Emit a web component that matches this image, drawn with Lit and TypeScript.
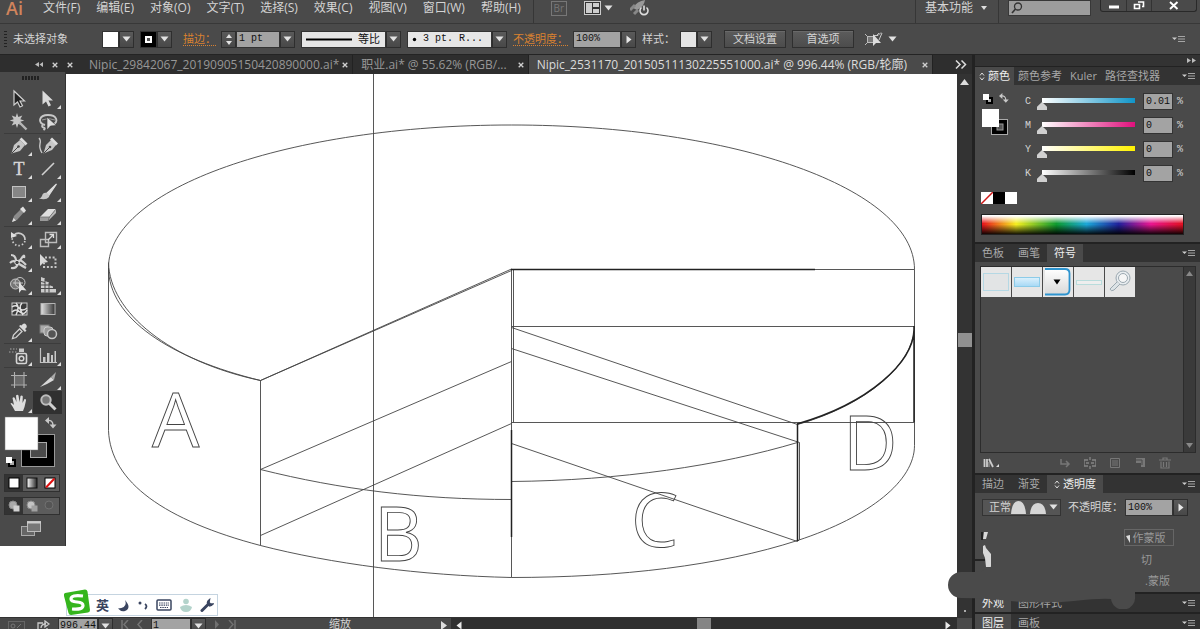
import { LitElement, html, svg, css, nothing } from "lit";
import { customElement, property } from "lit/decorators.js";
import { classMap } from "lit/directives/class-map.js";
import { styleMap } from "lit/directives/style-map.js";

const base = css`
  *, *::before, *::after { box-sizing: border-box; }
  :host { color: #d4d4d4; font: 11px/14px "Open Sans", "Noto Sans CJK SC", sans-serif; }
  button, input, select { font: inherit; color: inherit; margin: 0; padding: 0; border: 0; border-radius: 0; background: none; min-width: 0; }
  button { display: flex; align-items: center; justify-content: center; flex: none; white-space: nowrap; }
  svg { display: block; flex: none; }
  .mono { font-family: "Liberation Mono", "Noto Sans CJK SC", monospace; font-size: 10px; }
  .box { background: #a3a3a3; color: #111; border: 1px solid #333; }
  .drop { width: 15px; border: 1px solid #2e2e2e; background: linear-gradient(#5a5a5a, #484848); }
`;

const down = svg`<svg width="9" height="6" viewBox="0 0 9 6"><path d="M0.500 0.500h8l-4 5z" fill="#e2e2e2"/></svg>`;
const right = svg`<svg width="6" height="9" viewBox="0 0 6 9"><path d="M0.500 0.500v8l5-4z" fill="#e8e8e8"/></svg>`;
const left = svg`<svg width="6" height="9" viewBox="0 0 6 9"><path d="M5.500 0.500v8l-5-4z" fill="#e8e8e8"/></svg>`;
const cross = svg`<svg width="6" height="6" viewBox="0 0 6 6"><path d="M0.700 0.700l4.600 4.600M5.300 0.700L0.700 5.300" stroke="#d0d0d0" stroke-width="1.300"/></svg>`;
const flyout = svg`<svg width="14" height="8" viewBox="0 0 14 8"><path d="M0 2.500h5L2.500 5z" fill="#ccc"/><path d="M6 1.500h7M6 4h7M6 6.500h7" stroke="#a5a5a5" fill="none"/></svg>`;
const swap = svg`<g fill="none" stroke="#c8c8c8" stroke-width="1.400"><path d="M2 3.500q6-1 6 5"/></g><path d="M4 0v7L0 3.500zM4.500 7.500h7L8 11.500z" fill="#c8c8c8"/>`;

interface Tool { name: string; icon: unknown; more?: boolean; active?: boolean; }
const g = "#c6c6c6";
const toolGroups: Tool[][] = [
  [
    { name: "选择工具", icon: svg`<path d="M5 2v14l3.500-3 2.500 5 2.500-1.300-2.500-4.700h4.500z" fill="#222" stroke="#d0d0d0" stroke-width="1.200"/>` },
    { name: "直接选择工具", more: true, icon: svg`<path d="M4.500 1.500v14l3.500-3 2.500 5 2.500-1.300-2.500-4.700h4.500z" fill="#dadada"/>` },
    { name: "魔棒工具", icon: svg`<path d="M8 1l1.300 4 4-1.500-2 3.700 4 1.300-4 1.300 2 3.500-4-1.300L8 16l-1.300-4-4 1.500 2-3.700-4-1.300 4-1.300-2-3.700 4 1.500z" fill="${g}"/><path d="M10.500 10.500l7 7" stroke="#b5b5b5" stroke-width="2.400"/>` },
    { name: "套索工具", icon: svg`<path d="M7 13C-1 11 1 3 10 3s11 7 5 9.500M5 12q-2 3 .5 3.500t0 2.500" fill="none" stroke="${g}" stroke-width="1.900"/><path d="M4 8q6-3 13 0" fill="none" stroke="#999"/><path d="M9 5v13l3.500-4 6-.5z" fill="#dcdcdc" stroke="#333" stroke-width=".6"/>` },
  ],
  [
    { name: "钢笔工具", more: true, icon: svg`<path d="M2.500 17.500L5 9l6-5 5 5-5 6z" fill="${g}"/><path d="M3 17l6.500-6.500" stroke="#444"/><circle cx="9.500" cy="10.500" r="1.300" fill="#444"/><path d="M11.500 2.500l6 6" stroke="#dcdcdc" stroke-width="2.800"/>` },
    { name: "曲率工具", icon: svg`<path d="M5.500 17.500L8 9l5-5 5 5-4 5z" fill="${g}"/><path d="M6 17l6-6" stroke="#444"/><circle cx="12" cy="11" r="1.300" fill="#444"/><path d="M13 2.500l6 6" stroke="#dcdcdc" stroke-width="2.800"/><path d="M1 2q2 2 1 6t2 9" fill="none" stroke="${g}" stroke-width="1.400"/>` },
    { name: "文字工具", more: true, icon: svg`<text x="10" y="16" text-anchor="middle" font-family="Liberation Serif" font-size="18" fill="#d6d6d6" stroke="#d6d6d6" stroke-width=".4">T</text>` },
    { name: "直线段工具", more: true, icon: svg`<path d="M4 16L16 4" stroke="#d0d0d0" stroke-width="1.600"/>` },
    { name: "矩形工具", more: true, icon: svg`<rect x="3.500" y="4.500" width="13" height="11" fill="#868686" stroke="#c2c2c2"/>` },
    { name: "画笔工具", more: true, icon: svg`<path d="M18.500 2L9 11l2 2z" fill="#dcdcdc" stroke="#dcdcdc" stroke-width="1.200"/><path d="M9 11q-4-1-5 3-1 2-3 2.500 7 2 10-1.500 1-2-2-4z" fill="${g}"/>` },
    { name: "铅笔工具", more: true, icon: svg`<path d="M3 17l2-6 8-8 3 3-8 9z" fill="#8b8b8b"/><path d="M11 4l4 4 2-2.500-3-4z" fill="#e0e0e0"/><path d="M3 17l1.500-4 2.500 2.500z" fill="#ddd"/>` },
    { name: "橡皮擦工具", more: true, icon: svg`<path d="M2 12L10 4h8l-6.500 8z" fill="#dedede"/><path d="M2 12v4h8l1.500-4z" fill="#9a9a9a"/><path d="M11.500 12L18 4v4l-8 8z" fill="#b8b8b8"/><path d="M2 12h9.500l-1.500 4M11.500 12L18 4" fill="none" stroke="#666" stroke-width=".7"/>` },
  ],
  [
    { name: "旋转工具", more: true, icon: svg`<path d="M5 6a6.500 6.500 0 0 1 11 5" fill="none" stroke="#ccc" stroke-width="1.700"/><path d="M16 12a6.500 6.500 0 0 1-12.500-4" fill="none" stroke="#ccc" stroke-width="1.700" stroke-dasharray="1.500 2"/><path d="M2 3v6l6-2z" fill="#ddd"/>` },
    { name: "比例缩放工具", more: true, icon: svg`<path d="M7.500 3.500h11v10h-11zM2.500 10.500h8v7h-8z" fill="none" stroke="#bcbcbc" stroke-width="1.400"/><path d="M10 11l5-5m-3.500-.5H15.500V9" fill="none" stroke="#ddd" stroke-width="1.300"/>` },
    { name: "宽度工具", more: true, icon: svg`<path d="M2 3q4 0 5 5t5-1 3-1 M2 16q6 1 7-5t8 2M1 11q3-3 6-1t10 6" fill="none" stroke="#d0d0d0" stroke-width="2.200"/><circle cx="8" cy="10.500" r="2.200" fill="#444" stroke="#ddd"/>` },
    { name: "自由变换工具", icon: svg`<path d="M2 2v12l3-3 5-1z" fill="#d8d8d8"/><path d="M7 5.500h10.500v9.500H6V11" fill="none" stroke="#c8c8c8" stroke-width="2" stroke-dasharray="2 1.800"/>` },
    { name: "形状生成器工具", more: true, icon: svg`<circle cx="6.500" cy="9" r="5" fill="#777" stroke="${g}"/><circle cx="11" cy="7.500" r="5" fill="none" stroke="${g}"/><path d="M4 8h10" stroke="${g}"/><path d="M10 7v11l2.500-3 5 .5z" fill="#e0e0e0"/>` },
    { name: "透视网格工具", more: true, icon: svg`<path d="M3 2l4 1.500V6l4 1.500V10l4 1.500V14h3v3.500H3z" fill="#ccc"/><path d="M3 6.500l4 1M3 10h9M3 13.500h14M7 4v13.500M11 8v9.500" stroke="#4a4a4a" fill="none"/>` },
  ],
  [
    { name: "网格工具", icon: svg`<rect x="3" y="4" width="15" height="12" fill="#3a3a3a" stroke="#ccc"/><path d="M3 8q4-3 7 1t8 0M3 13q4-4 8 0t7-2M7 4q4 4 0 12M13 4q-4 4 1 12" fill="none" stroke="#e0e0e0" stroke-width="1.500"/>` },
    { name: "渐变工具", icon: svg`<defs><linearGradient id="gt"><stop stop-color="#e5e5e5"/><stop offset="1" stop-color="#333"/></linearGradient></defs><rect x="3" y="4.500" width="14" height="11" fill="url(#gt)" stroke="#b5b5b5"/>` },
    { name: "吸管工具", more: true, icon: svg`<path d="M3.500 16.500l1-3.500 6-6 2.500 2.500-6 6z" fill="none" stroke="#d0d0d0" stroke-width="1.300"/><path d="M10 4l6 6 1.500-1.500L16 7q3-2 1-4.500t-4.500 1L11.500 3z" fill="#dadada"/>` },
    { name: "混合工具", icon: svg`<rect x="2" y="3" width="9" height="8" fill="#aaa" stroke="#777"/><rect x="6" y="5" width="9" height="9" rx="3" fill="#999" stroke="#ccc"/><circle cx="14" cy="12" r="4.500" fill="#555" stroke="#c6c6c6" stroke-width="1.500"/>` },
  ],
  [
    { name: "符号喷枪工具", more: true, icon: svg`<rect x="7.500" y="7.500" width="10" height="10" rx="1.500" fill="none" stroke="#d6d6d6" stroke-width="1.600"/><circle cx="12.500" cy="12.500" r="2.300" fill="none" stroke="#d6d6d6" stroke-width="1.500"/><path d="M10 6V2.500h5V6z" fill="#c6c6c6"/><path d="M1 3h7M0 6h8" stroke="#888" stroke-width="1.500" stroke-dasharray="1.500 1.500"/>` },
    { name: "柱形图工具", more: true, icon: svg`<path d="M2.500 2v14.500H19" fill="none" stroke="#c2c2c2" stroke-width="1.200"/><path d="M5 11h2.500v5H5zM9 7h2.500v9H9zM13 9h2v7h-2zM16.500 5H18v11h-1.500z" fill="#c8c8c8"/>` },
  ],
  [
    { name: "画板工具", icon: svg`<rect x="6" y="6" width="8.500" height="8.500" fill="#6a6a6a"/><path d="M5.500 2v16M15 2v16M2 5.500h16M2 15h16" stroke="#b0b0b0" stroke-width="1.100"/>` },
    { name: "切片工具", more: true, icon: svg`<path d="M2 17L13 7l3 3-7 4z" fill="#d8d8d8"/><path d="M13 7l5-5-2 8z" fill="#aaa"/>` },
    { name: "抓手工具", more: true, icon: svg`<path d="M6 18Q4 14 1.500 10.500q1-1.500 3 1L5 12 3.500 5q1.500-1.500 2.500.5L7.500 9 7 2.500q1.500-1.500 2.500 0L10.500 9l1-6q1.500-1.300 2.300.5L13.500 10l2-4q1.800-.5 1.500 1.500L15.500 14 14 18z" fill="#dedede"/>` },
    { name: "缩放工具", active: true, icon: svg`<circle cx="8" cy="7" r="4.700" fill="#777" stroke="#bdbdbd" stroke-width="2"/><path d="M11.500 10.500l6 6" stroke="#cfcfcf" stroke-width="3"/>` },
  ],
];

@customElement("tool-panel")
class ToolPanel extends LitElement {
  static styles = [base, css`
    :host { display: block; width: 66px; padding: 4px 4px 8px; background: #4a4a4a; border-right: 1px solid #333; }
    .grip { width: 18px; height: 4px; margin: 0 auto 7px 18px; background: repeating-linear-gradient(90deg, #222 0 2px, #4a4a4a 2px 3px); }
    .group { display: grid; grid-template-columns: 29px 29px; grid-auto-rows: 23px; }
    .group + .group { border-top: 1px solid #3c3c3c; }
    .tool { position: relative; }
    .active { background: #303030; }
    .more::after { content: ""; position: absolute; right: 1px; bottom: 1px; border: 2px solid; border-color: transparent #ddd #ddd transparent; }
    .colors { margin-top: 1px; }
    .row { display: grid; grid-template-columns: repeat(3, 18px); height: 18px; border: 1px solid #303030; width: 56px; margin-top: 5px; background: #5c5c5c; }
    .row > button { width: 100%; height: 16px; }
    .row > .on { background: #333; }
    .screen { margin: 5px 0 0 16px; }
  `];
  render() {
    return html`
      <div class="grip"></div>
      ${toolGroups.map((tools) => html`<div class="group">${tools.map((t) => html`
        <button class=${classMap({ tool: true, more: !!t.more, active: !!t.active })} aria-label=${t.name}>
          <svg width="20" height="20" viewBox="0 0 20 20">${t.icon}</svg>
        </button>`)}</div>`)}
      <button class="colors" aria-label="填色和描边">
        <svg width="56" height="54" viewBox="4 415 56 54">
          <rect x="21.500" y="434.500" width="33" height="32" fill="#000" stroke="#999"/>
          <rect x="30.500" y="442.500" width="16" height="15" fill="#4a4a4a" stroke="#aaa"/>
          <rect x="5" y="417" width="33" height="33" fill="#fff" stroke="#777" stroke-width=".5"/>
          <g transform="translate(45 417)">${swap}</g>
          <rect x="9" y="460" width="6" height="6" stroke="#000" stroke-width="2" fill="#aaa"/><rect x="6" y="457" width="6" height="6" fill="#fff"/>
        </svg>
      </button>
      <div class="row">
        <button class="on" aria-label="颜色"><svg width="12" height="12"><rect x="1" y="1" width="10" height="10" fill="#fff" stroke="#000"/></svg></button>
        <button aria-label="渐变"><svg width="12" height="12"><defs><linearGradient id="gr"><stop stop-color="#fff"/><stop offset="1" stop-color="#222"/></linearGradient></defs><rect x="1" y="1" width="10" height="10" fill="url(#gr)" stroke="#111"/></svg></button>
        <button aria-label="无"><svg width="12" height="12"><rect x="1" y="1" width="10" height="10" fill="#fff" stroke="#000"/><path d="M2 10.500l8.500-9" stroke="#e01010" stroke-width="2"/></svg></button>
      </div>
      <div class="row">
        ${["正常绘图", "背面绘图", "内部绘图"].map((n, i) => html`<button class=${i === 0 ? "on" : ""} aria-label=${n}>
          <svg width="14" height="12"><circle cx="6" cy="5" r="4" fill=${["#aaa", "#c4c4c4", "#555"][i]} stroke=${i === 2 ? "#707070" : "#888"}/><rect x="6.500" y="5.500" width="6" height="6" fill=${["#d0d0d0", "#a0a0a0", "none"][i]}/></svg>
        </button>`)}
      </div>
      <button class="screen" aria-label="更改屏幕模式">
        <svg width="22" height="18"><rect x="1.500" y="6.500" width="13" height="9" fill="#666" stroke="#aaa"/><rect x="7.500" y="1.500" width="13" height="10" fill="#777" stroke="#bbb"/><path d="M7 2.500h14" stroke="#ccc" stroke-width="2"/></svg>
      </button>`;
  }
}

@customElement("control-bar")
class ControlBar extends LitElement {
  static styles = [base, css`
    :host { display: flex; align-items: center; gap: 6px; height: 31px; padding: 0 14px 0 4px; background: #4a4a4a; border-top: 1px solid #383838; }
    .grip { width: 3px; height: 16px; background: repeating-linear-gradient(#222 0 1px, #4a4a4a 1px 3px); }
    .status { width: 83px; }
    .field { display: flex; align-items: center; gap: 5px; white-space: nowrap; }
    .first { margin-left: 5px; }
    .combo { display: flex; height: 17px; }
    .combo > button { height: 17px; }
    .swatch { width: 17px; border: 1px solid #333; background: #fff; }
    .soft { background: #e4e4e4; }
    .stroke { background: #000; }
    .link { color: #d98130; border-bottom: 1px dotted #d98130; line-height: 13px; }
    .w44 { width: 44px; } .w48 { width: 48px; }
    .box { padding-left: 2px; }
    .list { display: flex; align-items: center; background: #e6e6e6; color: #111; border: 1px solid #333; padding: 0 4px; gap: 6px; width: 85px; }
    select { appearance: none; height: 15px; }
    .list select { flex: 1; }
    .push { height: 18px; width: 62px; border: 1px solid #2f2f2f; box-shadow: inset 0 1px #696969; background: linear-gradient(#5c5c5c, #4c4c4c); }
    .pair { display: flex; gap: 6px; margin: 0 5px 0 6px; }
    .align { gap: 5px; }
    .end { margin-left: auto; }
  `];
  render() {
    const arrow = (label: string, icon: unknown = down) => html`<button class="drop" aria-label=${label}>${icon}</button>`;
    return html`
      <span class="grip"></span>
      <span class="status">未选择对象</span>
      <div class="combo"><button class="swatch" aria-label="填色"></button>${arrow("填色选项")}</div>
      <div class="combo"><button class="swatch stroke" aria-label="描边颜色"><svg width="9" height="9"><rect x="2" y="2" width="5" height="5" fill="#555" stroke="#fff" stroke-width="2"/></svg></button>${arrow("描边颜色选项")}</div>
      <div class="field first">
        <label class="link" for="weight">描边：</label>
        <div class="combo">
          <button class="drop" aria-label="增减"><svg width="8" height="13"><path d="M1 5h6L4 1zM1 8h6l-3 4z" fill="#e2e2e2"/></svg></button>
          <input id="weight" class="box mono w44" value="1 pt">${arrow("描边粗细")}
        </div>
      </div>
      <div class="combo"><div class="list"><svg width="46" height="3"><path d="M0 1.500h46" stroke="#000" stroke-width="2"/></svg><select aria-label="变量宽度配置文件"><option>等比</option></select></div>${arrow("配置文件")}</div>
      <div class="combo"><div class="list"><svg width="5" height="5"><circle cx="2.500" cy="2.500" r="1.700"/></svg><select class="mono" aria-label="画笔定义"><option>3 pt. R...</option></select></div>${arrow("画笔")}</div>
      <div class="field">
        <label class="link" for="opacity">不透明度：</label>
        <div class="combo"><input id="opacity" class="box mono w48" value="100%">${arrow("不透明度选项", right)}</div>
      </div>
      <div class="field">
        <span>样式：</span>
        <div class="combo"><button class="swatch soft" aria-label="图形样式"></button>${arrow("样式选项")}</div>
      </div>
      <div class="pair"><button class="push">文档设置</button><button class="push">首选项</button></div>
      <button class="align" aria-label="选择类似的对象">
        <svg width="18" height="15" viewBox="0 0 18 15"><path d="M2.500 4.500h6v6h-6z" fill="#777" stroke="#bbb"/><path d="M0 2l3 3M0 13l3-3M11 4l3-3" fill="none" stroke="#bbb"/><path d="M8 2v12l3-3h5z" fill="#ddd"/><path d="M9 3.500h4l3-3M14 8l3-7" stroke="#ccc" fill="none"/></svg>${down}
      </button>
      <button class="end" aria-label="面板菜单">${flyout}</button>`;
  }
}

@customElement("menu-bar")
class MenuBar extends LitElement {
  static styles = [base, css`
    :host { display: flex; align-items: center; height: 23px; padding: 0 3px 7px 6px; background: #4a4a4a; }
    .logo { color: #d0845c; font: 600 18px/16px "Open Sans", sans-serif; width: 29px; }
    nav { display: flex; gap: 16px; padding-left: 8px; }
    nav > button { font-size: 12px; }
    .line { width: 1px; height: 23px; margin-top: 7px; background: #363636; }
    .icons { display: flex; align-items: center; gap: 17px; padding-left: 12px; margin-right: auto; }
    .bridge { width: 16px; height: 15px; border: 1px solid #777; color: #777; font-size: 10px; }
    .layout { gap: 3px; }
    .space { font-size: 12px; gap: 8px; padding: 0 11px 0 9px; }
    .search { display: flex; align-items: center; width: 83px; height: 16px; margin: 0 9px; background: #9d9d9d; border: 1px solid #383838; color: #111; padding-left: 2px; }
    .search input { width: 60px; }
    .win { display: flex; width: 97px; height: 12px; border: 1px solid #292929; border-top: 0; border-radius: 0 0 3px 3px; margin-bottom: 4px; }
    .win > button { width: 25px; height: 11px; }
    .win > button + button { border-left: 1px solid #333; }
    .win > .close { flex: 1; }
  `];
  render() {
    const menus = ["文件(F)", "编辑(E)", "对象(O)", "文字(T)", "选择(S)", "效果(C)", "视图(V)", "窗口(W)", "帮助(H)"];
    return html`
      <span class="logo">Ai</span>
      <nav>${menus.map((m) => html`<button>${m}</button>`)}</nav>
      <div class="icons">
        <span class="line"></span>
        <button class="bridge">Br</button>
        <button class="layout" aria-label="排列文档"><svg width="17" height="14"><rect x=".5" y=".5" width="16" height="13" fill="#333" stroke="#ccc"/><path d="M2 2h6v10H2zM9 2h6v4H9zM9 8h6v4H9z" fill="#ccc"/></svg>${down}</button>
        <button aria-label="GPU 性能"><svg width="20" height="18" viewBox="0 0 20 18"><path d="M3 9Q7 2 15 1q-1 7-8 10z" fill="#999"/><path d="M0 11l5-5M4 15l4-4" stroke="#888" stroke-width="3"/><path d="M11.500 8.500a4 4 0 1 0 5 0M14 6.500v5" fill="none" stroke="#ddd" stroke-width="1.600"/></svg></button>
      </div>
      <span class="line"></span>
      <button class="space">基本功能 <svg width="6" height="4"><path d="M0 0h6L3 4z" fill="#ddd"/></svg></button>
      <span class="line"></span>
      <label class="search"><svg width="12" height="12"><circle cx="7" cy="4.500" r="3.500" fill="none" stroke="#333" stroke-width="1.300"/><path d="M4.500 7L1 11" stroke="#333" stroke-width="1.600"/></svg><input aria-label="搜索"></label>
      <div class="win">
        <button aria-label="最小化"><svg width="10" height="10"><path d="M0 6h10" stroke="#fff" stroke-width="3"/></svg></button>
        <button aria-label="还原"><svg width="12" height="9"><path d="M5 1h5.500v4.500H9M1.500 3.500h5v4h-5z" fill="none" stroke="#fff" stroke-width="1.600"/></svg></button>
        <button class="close" aria-label="关闭"><svg width="10" height="9"><path d="M1 1l7.500 7M8.500 1L1 8" stroke="#fff" stroke-width="1.900"/></svg></button>
      </div>`;
  }
}

@customElement("art-board")
class ArtBoard extends LitElement {
  static styles = css`
    :host { display: block; min-width: 0; background: #fff; overflow: hidden; }
    svg { display: block; width: 100%; height: 100%; }
    .ink { fill: none; stroke: #444; stroke-width: 0.900; }
    .bold { stroke: #222; stroke-width: 1.500; }
    .letter { font: 75px "Open Sans", sans-serif; stroke: #444; }
  `;
  render() {
    return html`<svg viewBox="0 74 957 543" preserveAspectRatio="xMinYMin meet" role="img" aria-label="立体饼图轮廓">
      <g class="ink">
        <path d="M373.500 74V617"/>
        <g transform="translate(.5 .5)">
          <path d="M914 269C914 188 734 124.500 511 124.500S108 188 108 267C108 318 170 358 260 380L511 270"/>
          <path d="M108 262C109 312 170 361 260 380M260 380L511 268.500"/>
          <path d="M108 267V430C110 482 165 520 260 545C330 563 420 575 511 577C620 577 720 565 797 540C870 516 914 480 914 445V269"/>
          <path d="M260 380V545M260 469L511 361M260 535L511 423M260 469C340 489 420 499 511 499"/>
          <path d="M511 269H914M511 326H914M511 422H914M511 269V577M513 269V422"/>
          <path d="M511 327L797 424M511 348L799 442M511 443L797 541M799 442V539L797 541"/>
          <path d="M511 481C620 480 720 465 797 442M797 424C870 403 913 362 914 326"/>
        </g>
        <g class="bold">
          <path d="M511 269.500H815M511.500 430V537M797.500 424V541M914 326V422M797 424C870 403 913 362 914 330"/>
        </g>
        <text class="letter" x="152" y="447">A</text>
        <text class="letter" x="374" y="561">B</text>
        <text class="letter" x="631" y="547">C</text>
        <text class="letter" x="843" y="470">D</text>
      </g>
    </svg>`;
  }
}

@customElement("dock-panel")
class DockPanel extends LitElement {
  @property({ type: Array }) tabs: string[] = [];
  @property({ type: Number }) active = 0;
  @property({ type: Boolean }) marker = false;
  @property({ type: Boolean }) compact = false;
  static styles = [base, css`
    :host { display: flex; flex-direction: column; flex: none; background: #4a4a4a; border-bottom: 2px solid #222; }
    .tabs { display: flex; height: 18px; background: #333; padding-right: 4px; flex: none; }
    .tabs > button { padding: 0 7px; gap: 3px; color: #a8a8a8; }
    .tabs > .on { background: #4a4a4a; color: #eee; }
    .compact > button { padding: 0 4px; }
    .tabs > .menu { margin-left: auto; padding: 0; }
  `];
  render() {
    return html`
      <div class=${classMap({ tabs: true, compact: this.compact })}>
        ${this.tabs.map((t, i) => html`<button class=${i === this.active ? "on" : ""}>
          ${this.marker && i === this.active ? html`<svg width="6" height="9"><path d="M1 3.500L3 1l2 2.500M1 5.500L3 8l2-2.500" fill="none" stroke="#ddd"/></svg>` : nothing}${t}
        </button>`)}
        <button class="menu" aria-label="面板菜单">${flyout}</button>
      </div>
      <slot></slot>`;
  }
}

@customElement("color-mixer")
class ColorMixer extends LitElement {
  static styles = [base, css`
    :host { display: block; height: 157px; padding: 8px 15px 0 6px; }
    .top { display: grid; grid-template-columns: 36px 1fr; }
    .wells { align-self: start; justify-self: start; }
    .rows { display: grid; gap: 7px; }
    .row { display: grid; grid-template-columns: 8px 1fr 30px 8px; gap: 4px; height: 17px; align-items: center; margin-left: 8px; }
    .box { height: 17px; padding-left: 2px; width: 30px; }
    .slide { appearance: none; width: 100%; height: 17px; background: linear-gradient(90deg, #fff, var(--ink)) 5px 5px / calc(100% - 9px) 5px no-repeat; }
    .slide::-webkit-slider-thumb { appearance: none; width: 10px; height: 8px; margin-top: 9px; background: #d0d0d0; clip-path: polygon(50% 0, 100% 60%, 100% 100%, 0 100%, 0 60%); }
    .chips { display: flex; margin-top: 10px; }
    .chips > button { width: 12px; height: 12px; background: #fff; }
    .chips > .black { background: #000; }
    .spectrum { display: block; width: calc(100% - 1px); height: 21px; margin-top: 10px; border: 1px solid #222;
      background: linear-gradient(#fff 0 5%, transparent 45%, transparent 50%, #000 105%), linear-gradient(90deg, #e8111c, #f5ee20 17%, #0d9a2f 37%, #1ba7d8 52%, #20209a 68%, #e81590 84%, #e11020); }
  `];
  render() {
    const inks: [string, string, string][] = [["C", "0.01", "#1095c8"], ["M", "0", "#e0107c"], ["Y", "0", "#fff200"], ["K", "0", "#000"]];
    return html`
      <div class="top">
        <button class="wells" aria-label="填色和描边">
          <svg width="28" height="44" viewBox="980 91 28 44">
            <rect x="986" y="96" width="5" height="5" fill="#aaa" stroke="#000" stroke-width="2"/><rect x="982" y="92" width="6" height="6" fill="#fff"/>
            <g transform="translate(998 91) scale(.85)">${swap}</g>
            <rect x="990.500" y="117.500" width="16" height="15" fill="#000" stroke="#aaa"/><rect x="996" y="122" width="6" height="6" fill="#555" stroke="#999"/>
            <rect x="981" y="107" width="17" height="18" fill="#fff"/>
          </svg>
        </button>
        <div class="rows">${inks.map(([n, v, c]) => html`<div class="row">
          <label class="mono" for=${"ink" + n}>${n}</label>
          <input class="slide" type="range" min="0" max="100" value="0" aria-label=${n + " 滑块"} style=${styleMap({ "--ink": c })}>
          <input class="box mono" id=${"ink" + n} value=${v}><span class="mono">%</span>
        </div>`)}</div>
      </div>
      <div class="chips"><button aria-label="无"><svg width="12" height="12"><path d="M0 12L12 0" stroke="#d01818" stroke-width="1.500"/></svg></button><button class="black" aria-label="黑色"></button><button aria-label="白色"></button></div>
      <button class="spectrum" aria-label="CMYK 色谱"></button>`;
  }
}

@customElement("symbol-list")
class SymbolList extends LitElement {
  static styles = [base, css`
    :host { display: flex; flex-direction: column; flex: 1; min-height: 0; padding: 4px 4px 0 5px; }
    .list { display: flex; flex: 1; border: 1px solid #2c2c2c; }
    .tiles { display: flex; flex: 1; gap: 1px; align-items: flex-start; }
    .tile { width: 30px; height: 30px; background: #e6e6e6; }
    .bar { display: flex; flex-direction: column; justify-content: space-between; align-items: center; width: 12px; padding: 4px 0; background: #3a3a3a; border-left: 1px solid #2c2c2c; }
    .foot { display: flex; align-items: center; height: 20px; padding: 0 25px 0 3px; gap: 13px; }
    .lib { margin-right: auto; }
  `];
  render() {
    const tiles = [
      svg`<rect x="2.500" y="6.500" width="25" height="17" fill="#e2e4e5" stroke="#b5d8e4"/>`,
      svg`<defs><linearGradient id="b" x2="0" y2="1"><stop stop-color="#ddf1fc"/><stop offset="1" stop-color="#a5d8f5"/></linearGradient></defs><rect x="2.500" y="10.500" width="25" height="9" fill="url(#b)" stroke="#8ccbe8"/>`,
      svg`<defs><linearGradient id="w" x2="0" y2="1"><stop stop-color="#fff"/><stop offset="1" stop-color="#d8d8d8"/></linearGradient></defs><path d="M2 2h20q4.500 0 4.500 4.500v16q0 5-4.500 5H2" fill="url(#w)" stroke="#2e94cf" stroke-width="1.800"/><path d="M10.500 12.500h7l-3.500 5z" fill="#000"/>`,
      svg`<rect x="2.500" y="13.500" width="25" height="4" fill="#eee" stroke="#b9dcdc"/>`,
      svg`<circle cx="18" cy="11" r="7" fill="#e9edf0" stroke="#9ba8b0"/><circle cx="18" cy="11" r="4.500" fill="#f6f6f6" stroke="#9ba8b0"/><path d="M12 15l-7 7q1 3 4 1l6-6" fill="#dde3e6" stroke="#9ba8b0"/>`,
    ];
    const foot: [string, unknown][] = [
      ["置入符号实例", svg`<path d="M2 2v5h8M7 4l3 3-3 3" fill="none" stroke="#777" stroke-width="1.500"/>`],
      ["断开符号链接", svg`<path d="M4 3H0v6h4M8 3h4v6H8M2 6h3M7 6h3M6 0v3M6 9v3" fill="none" stroke="#858585" stroke-width="1.300"/>`],
      ["符号选项", svg`<path d="M1.500 1.500h9v9h-9zM3 4h6M3 6h6M3 8h6" fill="none" stroke="#777"/>`],
      ["新建符号", svg`<path d="M2 1h9v9H7V6H2z" fill="#777"/><path d="M2 3h6v5" fill="none" stroke="#4a4a4a"/>`],
      ["删除符号", svg`<path d="M0 3h12M4 3V1h4v2M2 4.500v6.500h8V4.500M4.500 5v5M7.500 5v5" fill="none" stroke="#777" stroke-width="1.200"/>`],
    ];
    return html`
      <div class="list">
        <div class="tiles">${tiles.map((t, i) => html`<button class="tile" aria-label=${"符号 " + (i + 1)}><svg width="30" height="30">${t}</svg></button>`)}</div>
        <div class="bar"><svg width="7" height="5"><path d="M0 5h7L3.500 0z" fill="#888"/></svg><svg width="7" height="5"><path d="M0 0h7L3.500 5z" fill="#888"/></svg></div>
      </div>
      <div class="foot">
        <button class="lib" aria-label="符号库菜单"><svg width="17" height="11"><path d="M1.500 1v8M4 1v8M6 1l4 8" fill="none" stroke="#ccc" stroke-width="1.800"/><path d="M6 4v5" stroke="#aaa"/><path d="M13 9h3V6z" fill="#ddd"/></svg></button>
        ${foot.map(([n, i]) => html`<button aria-label=${n}><svg width="12" height="12">${i}</svg></button>`)}
      </div>`;
  }
}

@customElement("opacity-settings")
class OpacitySettings extends LitElement {
  static styles = [base, css`
    :host { display: block; height: 99px; padding: 5px 12px 0 7px; }
    .line { display: flex; align-items: center; height: 18px; }
    .mode { position: relative; display: flex; align-items: center; width: 79px; height: 17px; border: 1px solid #333; background: #555; }
    .mode select { appearance: none; width: 66px; padding-left: 6px; }
    .blob { position: absolute; left: 28px; top: 1px; }
    .name { margin-left: 7px; flex: 1; white-space: nowrap; }
    .box { width: 48px; height: 17px; padding-left: 2px; }
    .drop { height: 17px; }
    .mask { display: flex; flex-direction: column; align-items: flex-end; gap: 7px; margin: 13px 14px 0 0; color: #999; }
    .mask button { width: 50px; height: 17px; border: 1px solid #666; }
    .clip { width: 33px; }
    .invert { width: 29px; }
  `];
  render() {
    return html`
      <div class="line">
        <div class="mode"><select aria-label="混合模式"><option>正常</option></select>${down}
          <svg class="blob" width="36" height="13"><path d="M0 13Q1 0 7.500 0T15 13zM19 13Q20 2 27 2t8 11z" fill="#d6d6d6"/></svg></div>
        <label class="name" for="alpha">不透明度：</label>
        <input class="box mono" id="alpha" value="100%"><button class="drop" aria-label="不透明度选项">${right}</button>
      </div>
      <div class="mask"><button>作蒙版</button><span class="clip">切</span><span class="invert">.蒙版</span></div>`;
  }
}

@customElement("app-root")
class AppRoot extends LitElement {
  static styles = [base, css`
    :host { display: flex; flex-direction: column; height: 100vh; overflow: hidden; background: #4a4a4a; }
    menu-bar, control-bar { flex: none; }
    .main { display: flex; flex: 1; min-height: 0; border-top: 1px solid #242424; }
    .doc { display: flex; flex-direction: column; flex: 1; min-width: 0; }
    .tabs { display: flex; align-items: center; height: 19px; background: #2e2e2e; font-size: 12px; color: #979797; flex: none; }
    .tabs > .head { display: flex; align-items: center; justify-content: flex-end; gap: 9px; width: 73px; }
    .tab { display: flex; align-items: center; height: 19px; gap: 3px; padding: 0 4px 0 8px; border-right: 1px solid #222; white-space: nowrap; }
    .first { padding-left: 16px; }
    .wide { gap: 11px; }
    .on { background: #4a4a4a; color: #dcdcdc; gap: 15px; }
    .more { margin-left: auto; padding-right: 5px; }
    .work { position: relative; display: flex; flex: 1; min-height: 0; }
    art-board { flex: 1; }
    tool-panel { position: absolute; left: 0; top: -2px; }
    .ime { position: absolute; left: 66px; bottom: 1px; display: flex; align-items: center; gap: 8px; height: 22px; padding: 0 3px 0 29px; background: #fff; border: 1px solid #c5d4e0; color: #3a4560; }
    .ime b { font-size: 13px; }
    .sogou { position: absolute; left: -4px; bottom: 0; }
    .scroll { display: flex; flex-direction: column; align-items: center; justify-content: space-between; width: 15px; background: #333; padding: 5px 0; }
    .thumb { width: 14px; height: 14px; background: #919191; margin-bottom: 15px; }
    .end { width: 2px; height: 2px; background: #aaa; }
    .status { display: flex; align-items: flex-start; height: 12px; overflow: hidden; background: #484848; border-top: 1px solid #333; flex: none; }
    .status > * { flex: none; }
    .status .drop { height: 15px; }
    .s-icons { display: flex; gap: 12px; padding: 2px 8px 0 8px; }
    .status .box { height: 15px; width: 40px; padding-left: 1px; }
    .nav { display: flex; gap: 8px; padding: 2px 8px; }
    .status > .info { flex: 0 1 203px; display: flex; padding-left: 85px; line-height: 12px; justify-content: space-between; }
    .status > .hscroll { flex: 1; display: flex; justify-content: space-between; align-items: center; height: 14px; background: #2f2f2f; padding: 0 6px 0 5px; margin-left: 4px; }
    .hthumb { width: 14px; height: 14px; background: #858585; }
    .corner { width: 15px; height: 14px; background: #4a4a4a; }
    .dock { position: relative; display: flex; flex-direction: column; width: 228px; flex: none; border-left: 3px solid #222; }
    .collapse { display: flex; justify-content: flex-end; align-items: center; height: 12px; background: #333; border-bottom: 1px solid #222; padding-right: 4px; flex: none; }
    .symbols { flex: 1 1 0; min-height: 0; }
    .last { height: 15px; overflow: hidden; border: 0; }
    .smudge { position: absolute; left: -29px; bottom: 20px; pointer-events: none; }
  `];
  render() {
    const chevrons = svg`<svg width="9" height="5"><path d="M0 0v5l4-2.500zM5 0v5l4-2.500z" fill="#bbb"/></svg>`;
    return html`
      <menu-bar></menu-bar>
      <control-bar></control-bar>
      <div class="main">
        <div class="doc">
          <div class="tabs">
            <div class="head"><button aria-label="折叠"><svg width="8" height="5"><path d="M4 0v5L0 2.500zM8 0v5L4.500 2.500z" fill="#bbb"/></svg></button><button aria-label="关闭工具栏">${cross}</button><button aria-label="关闭标签">${cross}</button></div>
            <div class="tab first">Nipic_29842067_20190905150420890000.ai*<button aria-label="关闭">${cross}</button></div>
            <div class="tab wide">职业.ai* @ 55.62% (RGB/...<button aria-label="关闭">${cross}</button></div>
            <div class="tab on">Nipic_2531170_20150511130225551000.ai* @ 996.44% (RGB/轮廓)<button aria-label="关闭">${cross}</button></div>
            <button class="more" aria-label="更多文档"><svg width="12" height="9"><path d="M1 .5l4 4-4 4M6.500 .5l4 4-4 4" fill="none" stroke="#ddd" stroke-width="1.500"/></svg></button>
          </div>
          <div class="work">
            <art-board></art-board>
            <div class="scroll"><svg width="9" height="6"><path d="M0 6h9L4.500 0z" fill="#ddd"/></svg><span class="thumb"></span><span class="end"></span></div>
            <tool-panel></tool-panel>
            <div class="ime">
              <svg class="sogou" width="28" height="26" viewBox="0 0 28 26"><path d="M2 4L22 .5q2 0 2.500 2L27 21q0 2-2 2.500L8 26q-2 0-2.500-2L1 7Q.5 4.500 2 4z" fill="#35b51d"/><path d="M20 7q-12-1.500-12 3 0 2.500 6 3t6 3.500q0 4.500-11 3.500" fill="none" stroke="#fff" stroke-width="3.200"/></svg>
              <b>英</b>
              <svg width="13" height="13"><path d="M8 1q3 8-7 8.500 3 3.500 7 2.500 7-3 0-11z" fill="#3a4560"/></svg>
              <svg width="10" height="10"><circle cx="2" cy="3" r="1.500" fill="#3a4560"/><path d="M7 4q3 2 0 5" fill="none" stroke="#3a4560" stroke-width="1.800"/></svg>
              <svg width="16" height="12"><rect x="1" y="1" width="14" height="10" rx="1" fill="none" stroke="#3a4560" stroke-width="1.500"/><path d="M3 4h10M3 6.200h10M4 8.500h8" stroke="#3a4560" stroke-width="1.200" stroke-dasharray="1.500 .8"/></svg>
              <svg width="12" height="14"><circle cx="6" cy="3.500" r="2.800" fill="#b3d3cb"/><path d="M0 9q6-4 12 0-1 5-6 5T0 9z" fill="#b3d3cb"/></svg>
              <svg width="14" height="14"><path d="M2 12.500l6-6" stroke="#3a4560" stroke-width="3" stroke-linecap="round"/><path d="M9.500 1.500q-3 2-1.500 5t5-.5l-2.500 0-1.500-1.500z" fill="#3a4560" stroke="#3a4560" stroke-width="1.500"/></svg>
            </div>
          </div>
          <div class="status">
            <div class="s-icons"><svg width="17" height="12"><rect x=".5" y="1.500" width="16" height="10" fill="none" stroke="#666"/><circle cx="5" cy="6" r="2" fill="none" stroke="#777"/><path d="M9 8l4-4" stroke="#777"/></svg><svg width="13" height="12"><path d="M6 3H1v8h9V8M4 8q0-4 5-4M8 1l4 3-4 3z" fill="none" stroke="#ccc" stroke-width="1.300"/></svg></div>
            <input class="box mono" aria-label="缩放级别" value="996.44"><button class="drop" aria-label="缩放选项">${down}</button>
            <div class="nav"><svg width="8" height="9"><path d="M1 0v9M7 0L3 4.500 7 9" fill="none" stroke="#757575" stroke-width="1.500"/></svg><svg width="6" height="9"><path d="M5 0L1 4.500 5 9" fill="none" stroke="#757575" stroke-width="1.500"/></svg></div>
            <input class="box mono" aria-label="画板编号" value="1"><button class="drop" aria-label="画板选项">${down}</button>
            <div class="nav"><svg width="6" height="9"><path d="M1 0l4 4.500L1 9z" fill="#707070"/></svg><svg width="8" height="9"><path d="M1 0l4 4.500L1 9M7 0v9" fill="none" stroke="#707070" stroke-width="1.500"/></svg></div>
            <div class="info"><span>缩放</span><svg width="6" height="13" viewBox="0 -3 6 13"><path d="M0 0v9l6-4.500z" fill="#ddd"/></svg></div>
            <div class="hscroll">${left}<span class="hthumb"></span>${right}</div>
            <span class="corner"></span>
          </div>
        </div>
        <div class="dock">
          <div class="collapse"><button aria-label="折叠面板">${chevrons}</button></div>
          <dock-panel .tabs=${["颜色", "颜色参考", "Kuler", "路径查找器"]} marker compact><color-mixer></color-mixer></dock-panel>
          <dock-panel class="symbols" .tabs=${["色板", "画笔", "符号"]} .active=${2}><symbol-list></symbol-list></dock-panel>
          <dock-panel .tabs=${["描边", "渐变", "透明度"]} .active=${2} marker><opacity-settings></opacity-settings></dock-panel>
          <dock-panel .tabs=${["外观", "图形样式"]}></dock-panel>
          <dock-panel class="last" .tabs=${["图层", "画板"]}></dock-panel>
          <svg class="smudge" width="192" height="82" viewBox="947 527 192 82" aria-hidden="true">
            <path d="M985 532h4l-2 7h-3zM984 546l2-1 1 3 5 6v13l-5 0-1-9-2-5z" fill="#d8d8d8"/><path d="M1127 536l4-1v8z" fill="#ddd"/>
            <path d="M974 560h12M983 532v8" stroke="#222" stroke-width="2"/>
            <path d="M962 572h14q16-2 22-11h138v35a12 12 0 0 1-24 3q-10-1-37 2-30 3-65 0-20-3-48-3a13 13 0 0 1 0-26z" fill="#4a4a4a"/>
          </svg>
        </div>
      </div>`;
  }
}
